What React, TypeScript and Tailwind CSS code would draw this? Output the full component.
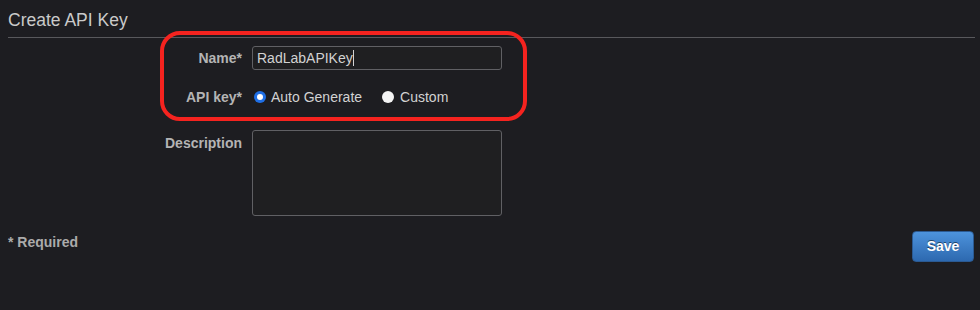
export default function App() {
  return (
    <div className="relative w-[980px] h-[310px] bg-[#1d1d21] font-['Liberation_Sans',Arial,sans-serif] overflow-hidden">
      <div className="ml-2 mr-[5px] h-[38px] border-b border-[#58585c]">
        <h1 className="pt-[10px] text-[17.5px] leading-[20px] text-[#cacaca]">Create API Key</h1>
      </div>

      <form className="flex flex-col">
        <div className="mt-2 flex items-center h-6">
          <label className="w-[242px] text-right text-[14px] font-bold text-[#b4b4b4]">Name*</label>
          <div className="ml-[10px] w-[250px] h-6 rounded-[3px] border border-[#606064] bg-[#1f1f21] flex items-center pl-[4px] text-[14px] text-[#d2d2d2]">
            RadLabAPIKey<span className="w-px h-[16px] bg-[#d2d2d2]" />
          </div>
        </div>

        <div className="mt-[15px] flex items-center h-6">
          <label className="w-[242px] text-right text-[14px] font-bold text-[#b4b4b4]">API key*</label>
          <div className="ml-[10px] flex items-center text-[14px] text-[#d2d2d2]">
            <span className="ml-[2px] w-3 h-3 rounded-full bg-[#1f6fe6] flex items-center justify-center">
              <span className="w-[6px] h-[6px] rounded-full bg-white" />
            </span>
            <span className="ml-[5px]">Auto Generate</span>
            <span className="ml-[20px] w-3 h-3 rounded-full bg-[#f4f4f4]" />
            <span className="ml-[6px]">Custom</span>
          </div>
        </div>

        <div className="mt-[21px] flex items-start">
          <label className="w-[242px] pt-[5px] text-right text-[14px] leading-4 font-bold text-[#b4b4b4]">Description</label>
          <div className="ml-[10px] w-[250px] h-[86px] rounded-[3px] border border-[#606064] bg-[#1f1f21]" />
        </div>

        <div className="mt-[15px] pl-2 pr-[6px] flex items-start justify-between">
          <span className="pt-[3px] text-[14px] leading-4 font-bold text-[#ababab]">* Required</span>
          <button
            type="button"
            className="w-[62px] h-[31px] rounded-[4px] border border-[#2b5a92] bg-gradient-to-b from-[#4d93dc] to-[#2d69b0] text-[14px] font-bold text-white [text-shadow:0_-1px_0_rgba(0,0,0,0.5)]"
          >
            Save
          </button>
        </div>
      </form>

      <div className="absolute left-[160px] top-[31px] w-[367px] h-[90px] rounded-[20px] border-[4px] border-[#f5231f]" />
    </div>
  )
}
